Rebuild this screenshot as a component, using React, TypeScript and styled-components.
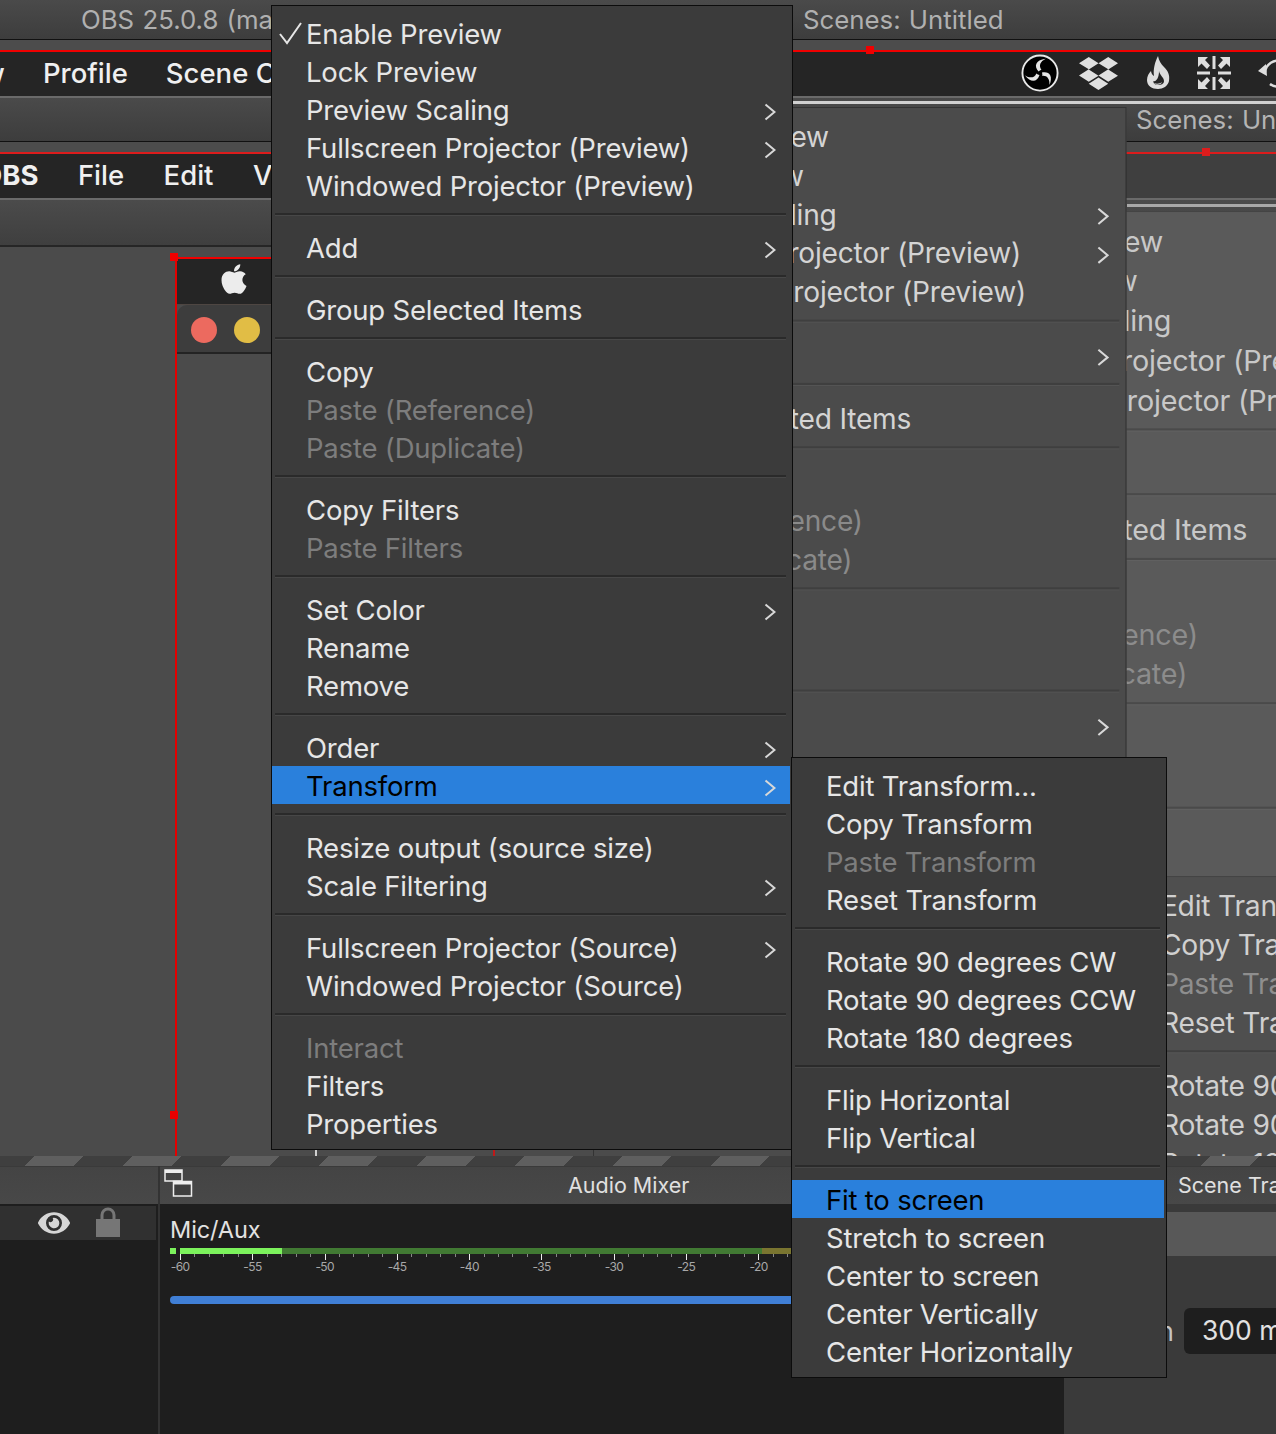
import React from 'react';
import styled, { createGlobalStyle } from 'styled-components';
import { FaApple, FaDropbox, FaEye } from 'react-icons/fa';

const GlobalStyle = createGlobalStyle`
  html, body {
    margin: 0;
    padding: 0;
    background: #1e1e1e;
  }
`;

const FONT = `Inter, "Liberation Sans", sans-serif`;

const Root = styled.div`
  position: relative;
  display: flex;
  flex-direction: column;
  width: 1276px;
  height: 1434px;
  overflow: hidden;
  font-family: ${FONT};
  background: #4b4b4b;
`;

const TitleBar = styled.div<{ $height: number; $left: number; $gap: number; $color: string }>`
  display: flex;
  align-items: center;
  gap: ${(p) => p.$gap}px;
  height: ${(p) => p.$height}px;
  padding: 1px 0 2px ${(p) => p.$left}px;
  border-bottom: 1px solid #111;
  background: linear-gradient(#4a4a4a, #3d3d3d);
  color: ${(p) => p.$color};
  font-size: 25.8px;
  word-spacing: 1px;
  white-space: nowrap;
  overflow: hidden;
`;

const RedStrip = styled.div<{ $line: string }>`
  height: 10px;
  background: #4c4c4c;
  border-bottom: 2px solid ${(p) => p.$line};
`;

const MenuBar = styled.div<{ $offset: number; $gap: number; $bg: string }>`
  display: flex;
  align-items: center;
  gap: ${(p) => p.$gap}px;
  height: 42px;
  padding-bottom: 2px;
  background: ${(p) => p.$bg};
  color: #f0f0f0;
  font-size: 27.5px;
  white-space: nowrap;
  overflow: hidden;
  & > :first-child {
    margin-left: ${(p) => p.$offset}px;
  }
`;

const BarLabel = styled.span<{ $bold?: boolean }>`
  font-weight: ${(p) => (p.$bold ? 700 : 500)};
  flex-shrink: 0;
`;

const Divider = styled.div`
  height: 2px;
  background: #6a6a6a;
`;

const Toolbar = styled.div`
  height: 45px;
  border-bottom: 2px solid #262626;
  background: linear-gradient(#4b4b4b, #3f3f3f);
`;

const IconTray = styled.div`
  display: flex;
  flex-shrink: 0;
  margin-left: auto;
  margin-right: -29px;
  color: #e0e0e0;
`;

const IconCell = styled.div`
  display: flex;
  align-items: center;
  justify-content: center;
  width: 59px;
  height: 42px;
`;

const GlowLine = styled.div<{ $left: number; $top: number; $color: string }>`
  position: absolute;
  left: ${(p) => p.$left}px;
  right: 0;
  top: ${(p) => p.$top}px;
  height: 3px;
  background: ${(p) => p.$color};
`;

const Handle = styled.div<{ $left: number; $top: number; $color: string }>`
  position: absolute;
  left: ${(p) => p.$left}px;
  top: ${(p) => p.$top}px;
  width: 8px;
  height: 8px;
  background: ${(p) => p.$color};
`;

const Preview = styled.div`
  position: relative;
  flex: 1;
  background: #4b4b4b;
`;

const SceneFrame = styled.div`
  position: absolute;
  left: 175px;
  top: 10px;
  bottom: 0;
  width: 200px;
  border-left: 2px solid #e30000;
  border-top: 2px solid #f00000;
`;

const AppleBar = styled.div`
  display: flex;
  align-items: center;
  justify-content: center;
  box-sizing: border-box;
  width: 113px;
  height: 46px;
  padding-bottom: 5px;
  border-bottom: 1px solid #4e4642;
  background: #252525;
  color: #ececec;
`;

const WindowHead = styled.div`
  display: flex;
  align-items: center;
  gap: 17px;
  box-sizing: border-box;
  height: 49px;
  padding: 2px 0 0 14px;
  border-bottom: 2px solid #232323;
  border-top-left-radius: 10px;
  background: #3d3d3d;
`;

const Light = styled.span<{ $color: string }>`
  width: 26px;
  height: 26px;
  border-radius: 50%;
  background: ${(p) => p.$color};
`;

const Tick = styled.div<{ $left: number; $color: string }>`
  position: absolute;
  left: ${(p) => p.$left}px;
  bottom: 0;
  width: 2px;
  height: 6px;
  background: ${(p) => p.$color};
`;

const Bottom = styled.div`
  position: relative;
  z-index: 4;
  display: flex;
  flex-direction: column;
`;

const Hazard = styled.div`
  height: 10px;
  background: repeating-linear-gradient(
    135deg,
    #3f3f3f 0 24.7px,
    #5f5f5f 24.7px 58.7px,
    #3f3f3f 58.7px 69.3px
  );
`;

const Docks = styled.div`
  display: flex;
  height: 268px;
  background: #1e1e1e;
`;

const DockHead = styled.div<{ $pad?: number }>`
  position: relative;
  height: 37px;
  padding-left: ${(p) => p.$pad || 0}px;
  border-top: 1px solid #3a3a3a;
  background: linear-gradient(#444, #484848);
  color: #e0e0e0;
  font-size: 21.5px;
  line-height: 37px;
  white-space: nowrap;
  overflow: hidden;
`;

const SourcesDock = styled.div`
  width: 158px;
  flex-shrink: 0;
`;

const SourceRow = styled.div`
  display: flex;
  align-items: center;
  gap: 26px;
  height: 34px;
  margin: 2px 2px 0 0;
  padding-left: 38px;
  background: #303030;
  color: #d6d6d6;
`;

const MixerDock = styled.div`
  flex-shrink: 0;
  width: 904px;
  border-left: 2px solid #333;
  overflow: hidden;
`;

const WindowsIcon = styled.svg`
  position: absolute;
  left: 4px;
  top: 2px;
`;

const MixerBody = styled.div`
  padding: 12px 0 0 10px;
`;

const ChannelName = styled.div`
  height: 28px;
  color: #e2e2e2;
  font-size: 23.5px;
  letter-spacing: -0.1px;
  line-height: 28px;
`;

const Meter = styled.div`
  display: flex;
  width: 621px;
  height: 6px;
  margin-top: 4px;
  overflow: hidden;
`;

const MeterPart = styled.span<{ $width: number; $color: string; $after?: number }>`
  flex-shrink: 0;
  width: ${(p) => p.$width}px;
  margin-right: ${(p) => p.$after || 0}px;
  background: ${(p) => p.$color};
`;

const TickRow = styled.div`
  display: flex;
  align-items: flex-start;
  height: 6px;
  margin-left: 10px;
`;

const ScaleTick = styled.span<{ $major: boolean }>`
  flex-shrink: 0;
  width: 14.46px;
  &::before {
    content: '';
    display: block;
    width: 1px;
    height: ${(p) => (p.$major ? 6 : 3)}px;
    background: ${(p) => (p.$major ? '#eee' : '#888')};
  }
`;

const ScaleLabels = styled.div`
  display: flex;
  margin-left: -26px;
  height: 14px;
`;

const ScaleLabel = styled.span`
  flex-shrink: 0;
  width: 72.3px;
  color: #a8a8a8;
  font-size: 12px;
  letter-spacing: -0.6px;
  line-height: 13px;
  text-align: center;
`;

const Slider = styled.div`
  width: 630px;
  height: 8px;
  margin-top: 22px;
  border-radius: 4px 0 0 4px;
  background: #407fd6;
`;

const TransitionDock = styled.div`
  flex: 1;
  min-width: 0;
  background: #3a3a3a;
`;

const ComboStrip = styled.div`
  height: 44px;
  margin-top: 8px;
  background: #585858;
`;

const DurationRow = styled.div`
  display: flex;
  align-items: center;
  gap: 10px;
  margin-top: 52px;
  color: #e2e2e2;
  font-size: 26.5px;
  white-space: nowrap;
`;

const DurationLabel = styled.span`
  width: 110px;
  flex-shrink: 0;
  color: #c4c4c4;
  text-align: right;
`;

const DurationField = styled.span`
  display: block;
  flex-shrink: 0;
  width: 110px;
  height: 46px;
  padding-left: 18px;
  border-radius: 6px;
  background: #1e1e1e;
  line-height: 44px;
`;

type Tone = 'front' | 'back' | 'far' | 'subBack';

const TONES: Record<Tone, { bg: string; border: string; text: string; muted: string; rule: string; glow: string }> = {
  front: { bg: '#3b3b3b', border: '#0c0c0c', text: '#e6e6e6', muted: '#7d7d7d', rule: '#2a2a2a', glow: '#474747' },
  back: { bg: '#4b4b4b', border: '#333', text: '#d4d4d4', muted: '#8a8a8a', rule: '#3f3f3f', glow: '#545454' },
  far: { bg: '#5a5a5a', border: '#444', text: '#c8c8c8', muted: '#8c8c8c', rule: '#4a4a4a', glow: '#626262' },
  subBack: { bg: '#4f4f4f', border: '#444', text: '#d0d0d0', muted: '#8e8e8e', rule: '#404040', glow: '#585858' },
};

const MenuPanel = styled.div<{ $x: number; $y: number; $width: number; $scale: number; $z: number; $tone: Tone }>`
  position: absolute;
  left: ${(p) => p.$x}px;
  top: ${(p) => p.$y}px;
  z-index: ${(p) => p.$z};
  box-sizing: border-box;
  width: ${(p) => p.$width}px;
  padding: 9px 0 6px;
  border: 1px solid ${(p) => TONES[p.$tone].border};
  background: ${(p) => TONES[p.$tone].bg};
  font-size: 27.5px;
  letter-spacing: -0.2px;
  transform: scale(${(p) => p.$scale});
  transform-origin: 0 0;
  white-space: nowrap;
`;

const Row = styled.div<{ $tone: Tone; $disabled?: boolean; $active?: boolean }>`
  position: relative;
  display: flex;
  align-items: center;
  justify-content: space-between;
  box-sizing: border-box;
  height: 38px;
  margin-right: 2px;
  padding: 0 14px 0 34px;
  color: ${(p) => (p.$active ? '#000' : p.$disabled ? TONES[p.$tone].muted : TONES[p.$tone].text)};
  ${(p) =>
    p.$active &&
    `
    margin-top: -1px;
    margin-bottom: 1px;
    padding-top: 2px;
    background: #2a80dc;
  `}
`;

const CheckMark = styled.svg`
  position: absolute;
  left: 7px;
  top: 7px;
`;

const Rule = styled.div<{ $tone: Tone }>`
  height: 24px;
  padding: 8px 6px 0 3px;
  box-sizing: border-box;
  &::before {
    content: '';
    display: block;
    height: 2px;
    background: ${(p) => TONES[p.$tone].rule};
    box-shadow: 0 1px 0 ${(p) => TONES[p.$tone].glow};
  }
`;

const ChevronIcon = styled.svg`
  margin-top: 4px;
`;

const LockSvg = styled.svg`
  margin-top: -2px;
`;

const ScaleArrowsSvg = styled.svg`
  margin-left: -6px;
`;

type Item = { label: string; arrow?: boolean; disabled?: boolean; active?: boolean; check?: boolean };

const CONTEXT_MENU: Item[][] = [
  [
    { label: 'Enable Preview', check: true },
    { label: 'Lock Preview' },
    { label: 'Preview Scaling', arrow: true },
    { label: 'Fullscreen Projector (Preview)', arrow: true },
    { label: 'Windowed Projector (Preview)' },
  ],
  [{ label: 'Add', arrow: true }],
  [{ label: 'Group Selected Items' }],
  [{ label: 'Copy' }, { label: 'Paste (Reference)', disabled: true }, { label: 'Paste (Duplicate)', disabled: true }],
  [{ label: 'Copy Filters' }, { label: 'Paste Filters', disabled: true }],
  [{ label: 'Set Color', arrow: true }, { label: 'Rename' }, { label: 'Remove' }],
  [{ label: 'Order', arrow: true }, { label: 'Transform', arrow: true, active: true }],
  [{ label: 'Resize output (source size)' }, { label: 'Scale Filtering', arrow: true }],
  [{ label: 'Fullscreen Projector (Source)', arrow: true }, { label: 'Windowed Projector (Source)' }],
  [{ label: 'Interact', disabled: true }, { label: 'Filters' }, { label: 'Properties' }],
];

const TRANSFORM_MENU: Item[][] = [
  [
    { label: 'Edit Transform...' },
    { label: 'Copy Transform' },
    { label: 'Paste Transform', disabled: true },
    { label: 'Reset Transform' },
  ],
  [{ label: 'Rotate 90 degrees CW' }, { label: 'Rotate 90 degrees CCW' }, { label: 'Rotate 180 degrees' }],
  [{ label: 'Flip Horizontal' }, { label: 'Flip Vertical' }],
  [
    { label: 'Fit to screen', active: true },
    { label: 'Stretch to screen' },
    { label: 'Center to screen' },
    { label: 'Center Vertically' },
    { label: 'Center Horizontally' },
  ],
];

const Chevron: React.FC = () => (
  <ChevronIcon width="12" height="18" viewBox="0 0 12 18">
    <polyline points="1.5,1.5 10.5,9 1.5,16.5" fill="none" stroke="#d8d8d8" strokeWidth="2" />
  </ChevronIcon>
);

type MenuProps = { groups: Item[][]; x: number; y: number; width: number; scale?: number; z: number; tone: Tone };

const Menu: React.FC<MenuProps> = ({ groups, x, y, width, scale = 1, z, tone }) => (
  <MenuPanel $x={x} $y={y} $width={width} $scale={scale} $z={z} $tone={tone}>
    {groups.map((group, index) => (
      <React.Fragment key={index}>
        {index > 0 && <Rule $tone={tone} />}
        {group.map((item) => (
          <Row key={item.label} $tone={tone} $disabled={item.disabled} $active={item.active}>
            {item.check && (
              <CheckMark width="24" height="24" viewBox="0 0 24 24">
                <polyline points="1,12 8,21 22,1" fill="none" stroke="#e6e6e6" strokeWidth="2" />
              </CheckMark>
            )}
            <span>{item.label}</span>
            {item.arrow && <Chevron />}
          </Row>
        ))}
      </React.Fragment>
    ))}
  </MenuPanel>
);

const ObsLogo: React.FC = () => (
  <svg width="38" height="38" viewBox="0 0 40 40">
    <circle cx="20" cy="20" r="18.5" fill="#000" stroke="#e8e8e8" strokeWidth="2" />
    {[0, 120, 240].map((angle) => (
      <path
        key={angle}
        transform={`rotate(${angle} 20 20)`}
        d="M18.5 18.5 C13.5 13 15 6.5 26 5 C20 8 18.5 12.5 21.5 16.5 C20.3 16.8 19.2 17.5 18.5 18.5 Z"
        fill="#e4e4e4"
      />
    ))}
  </svg>
);

const FlameIcon: React.FC = () => (
  <svg width="24" height="34" viewBox="0 0 24 34">
    <path
      d="M12 0 C13 5 15 8 18 11 C22 15 24 19 23 25 C22 30 17 33 12 33 C6 33 1 30 1 24 C1 20 3 17 5 15 C5.5 18 6.5 19 8 20 C7 13 9 6 12 0 Z"
      fill="#dedede"
    />
    <path d="M13 15 C14 20 18 21 18 25 C18 28 15 29 12 29 C9 29 7 27 7.5 25 C10 26 13 22 13 15 Z" fill="#252525" />
    <path d="M8 27 C10 28 14 28 16 26 C15 29 10 30 8 27 Z" fill="#dedede" />
  </svg>
);

const ScaleArrowsIcon: React.FC = () => (
  <ScaleArrowsSvg width="34" height="34" viewBox="0 0 34 34" fill="#dedede">
    <rect x="15.5" y="0" width="3" height="13" />
    <rect x="15.5" y="21" width="3" height="13" />
    <rect x="0" y="15.5" width="13" height="3" />
    <rect x="21" y="15.5" width="13" height="3" />
    <path d="M1 1 H11 L8 4 L13 9.5 L10 13 L4.5 7.5 L1 11 Z" />
    <path d="M33 1 H23 L26 4 L21 9.5 L24 13 L29.5 7.5 L33 11 Z" />
    <path d="M1 33 H11 L8 30 L13 24.5 L10 21 L4.5 26.5 L1 23 Z" />
    <path d="M33 33 H23 L26 30 L21 24.5 L24 21 L29.5 26.5 L33 23 Z" />
  </ScaleArrowsSvg>
);

const RewindIcon: React.FC = () => (
  <svg width="36" height="36" viewBox="0 0 36 36">
    <path d="M7 17 A13 13 0 1 1 12 29" fill="none" stroke="#dedede" strokeWidth="2.5" />
    <path d="M0 16 L8 9 L9 21 Z" fill="#dedede" />
  </svg>
);

const LockIcon: React.FC = () => (
  <LockSvg width="24" height="30" viewBox="0 0 24 30">
    <path d="M6 12 V8 A6 6 0 0 1 18 8 V12" fill="none" stroke="#767676" strokeWidth="3" />
    <rect x="0" y="12" width="24" height="18" fill="#767676" />
  </LockSvg>
);

const SCALE_VALUES = ['-60', '-55', '-50', '-45', '-40', '-35', '-30', '-25', '-20'];

const App: React.FC = () => (
  <Root>
    <GlobalStyle />

    <TitleBar $height={36} $left={81} $gap={506} $color="#b0b0b0">
      <span>OBS 25.0.8 (mac)</span>
      <span>Scenes: Untitled</span>
    </TitleBar>
    <RedStrip $line="#f00000" />
    <MenuBar $offset={-60} $gap={38} $bg="#252525">
      <BarLabel>View</BarLabel>
      <BarLabel>Profile</BarLabel>
      <BarLabel>Scene Collection</BarLabel>
      <IconTray>
        <IconCell><ObsLogo /></IconCell>
        <IconCell><FaDropbox size={39} /></IconCell>
        <IconCell><FlameIcon /></IconCell>
        <IconCell><ScaleArrowsIcon /></IconCell>
        <IconCell><RewindIcon /></IconCell>
      </IconTray>
    </MenuBar>
    <Divider />

    <TitleBar $height={40} $left={1136} $gap={0} $color="#b4b4b4">
      <span>Scenes: Untitled</span>
    </TitleBar>
    <RedStrip $line="#dc1c1c" />
    <MenuBar $offset={-19} $gap={39.5} $bg="linear-gradient(90deg, #252525 0 1127px, #3f3f3f 1127px)">
      <BarLabel $bold>OBS</BarLabel>
      <BarLabel>File</BarLabel>
      <BarLabel>Edit</BarLabel>
      <BarLabel>View</BarLabel>
    </MenuBar>
    <Divider />
    <Toolbar />

    <Preview>
      <SceneFrame>
        <AppleBar>
          <FaApple size={34} />
        </AppleBar>
        <WindowHead>
          <Light $color="#ec6a5f" />
          <Light $color="#e1bd45" />
        </WindowHead>
      </SceneFrame>
      <Handle $left={170} $top={6} $color="#f00000" />
      <Handle $left={170} $top={864} $color="#e80000" />
      <Tick $left={315} $color="#d0d0d0" />
      <Tick $left={493} $color="#c01818" />
    </Preview>

    <GlowLine $left={793} $top={101} $color="#d0d0d0" />
    <GlowLine $left={1127} $top={204} $color="#a8a8a8" />
    <Handle $left={866} $top={46} $color="#f00000" />
    <Handle $left={1202} $top={148} $color="#dc1c1c" />

    <Menu groups={CONTEXT_MENU} x={922} y={211} width={522} scale={1.045} z={1} tone="far" />
    <Menu groups={CONTEXT_MENU} x={593} y={107} width={522} scale={1.022} z={2} tone="back" />
    <Menu groups={TRANSFORM_MENU} x={1125} y={876} width={376} scale={1.025} z={3} tone="subBack" />

    <Bottom>
      <Hazard />
      <Docks>
        <SourcesDock>
          <DockHead />
          <SourceRow>
            <FaEye size={32} />
            <LockIcon />
          </SourceRow>
        </SourcesDock>
        <MixerDock>
          <DockHead $pad={408}>
            <WindowsIcon width="29" height="29" viewBox="0 0 29 29">
              <path d="M1 1 H18 V12 H1 Z" fill="none" stroke="#eee" strokeWidth="1.5" />
              <rect x="1" y="1" width="17" height="3" fill="#eee" />
              <path d="M9.5 12.5 H27.5 V27 H9.5 Z" fill="#3f3f3f" stroke="#eee" strokeWidth="1.5" />
              <rect x="9.5" y="12.5" width="18" height="3" fill="#eee" />
            </WindowsIcon>
            Audio Mixer
          </DockHead>
          <MixerBody>
            <ChannelName>Mic/Aux</ChannelName>
            <Meter>
              <MeterPart $width={6} $color="#7cf25c" $after={4} />
              <MeterPart $width={102} $color="#7cf25c" />
              <MeterPart $width={480} $color="#417a33" />
              <MeterPart $width={29} $color="#7a7530" />
            </Meter>
            <TickRow>
              {Array.from({ length: 43 }, (_, i) => (
                <ScaleTick key={i} $major={i % 5 === 0} />
              ))}
            </TickRow>
            <ScaleLabels>
              {SCALE_VALUES.map((value) => (
                <ScaleLabel key={value}>{value}</ScaleLabel>
              ))}
            </ScaleLabels>
            <Slider />
          </MixerBody>
        </MixerDock>
        <TransitionDock>
          <DockHead $pad={114}>Scene Transitions</DockHead>
          <ComboStrip />
          <DurationRow>
            <DurationLabel>Duration</DurationLabel>
            <DurationField>300 ms</DurationField>
          </DurationRow>
        </TransitionDock>
      </Docks>
    </Bottom>

    <Menu groups={CONTEXT_MENU} x={271} y={5} width={522} z={5} tone="front" />
    <Menu groups={TRANSFORM_MENU} x={791} y={757} width={376} z={6} tone="front" />
  </Root>
);

export default App;
